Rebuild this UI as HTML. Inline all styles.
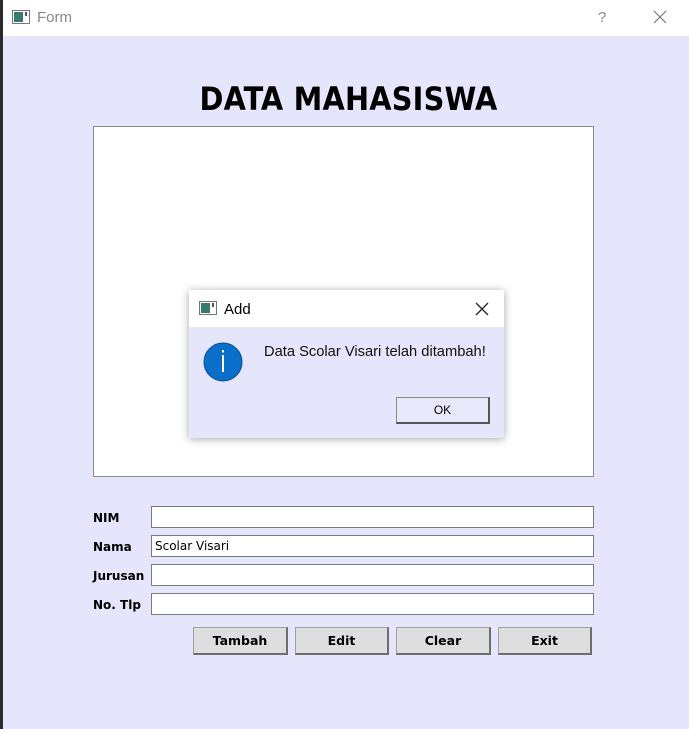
<!DOCTYPE html>
<html><head><style>
*{margin:0;padding:0;box-sizing:border-box}
body{width:689px;height:729px;position:relative;background:#e5e5fb;font-family:"DejaVu Sans","Liberation Sans",sans-serif;overflow:hidden}
.abs{position:absolute}
.strip{left:0;top:0;width:3px;height:729px;background:#2b2b2e}
.tb{left:3px;top:0;width:686px;height:36px;background:#fff}
.inp{position:absolute;left:151px;width:443px;height:22px;background:#fff;border:1px solid #7a7a7a;font-size:12px;padding:3px 3px;font-family:"DejaVu Sans",sans-serif}
.lbl{position:absolute;left:93px;font-size:12px;font-weight:bold;color:#000}
.btn{position:absolute;top:627px;height:28px;background:#dedede;border:1px solid #a0a0a0;border-right:2px solid #6e6e6e;border-bottom:2px solid #6e6e6e;font-size:12.5px;font-weight:bold;text-align:center;line-height:25px}
</style></head><body>
<div class="abs strip"></div>
<div class="abs tb"></div>
<svg class="abs" style="left:12px;top:10px" width="18" height="14"><rect x="0.5" y="0.5" width="17" height="13" fill="#fff" stroke="#777"/><rect x="2" y="2" width="9" height="10" fill="#3a7a6a"/><rect x="13" y="2" width="2" height="4" fill="#555"/></svg>
<div class="abs" style="left:37px;top:9px;font-size:15px;color:#888;font-family:'Liberation Sans',sans-serif">Form</div>
<div class="abs" style="left:598px;top:9px;font-size:15px;color:#888;font-family:'Liberation Sans',sans-serif">?</div>
<svg class="abs" style="left:653px;top:10px" width="14" height="14"><path d="M1 1L13 13M13 1L1 13" stroke="#777" stroke-width="1.2"/></svg>
<div class="abs" style="left:0;width:697px;top:80px;text-align:center;font-size:32px;font-weight:bold;font-family:'DejaVu Sans Condensed','DejaVu Sans',sans-serif;letter-spacing:0.2px">DATA MAHASISWA</div>
<div class="abs" style="left:93px;top:126px;width:501px;height:351px;background:#fff;border:1px solid #8a8a8a"></div>
<div class="abs" style="left:189px;top:290px;width:315px;height:148px;background:#e5e5fb;box-shadow:0 1px 8px rgba(0,0,0,0.35)">
 <div class="abs" style="left:0;top:0;width:315px;height:37px;background:#fff"></div>
 <svg class="abs" style="left:10px;top:11px" width="18" height="14"><rect x="0.5" y="0.5" width="17" height="13" fill="#fff" stroke="#777"/><rect x="2" y="2" width="9" height="10" fill="#3a7a6a"/><rect x="13" y="2" width="2" height="4" fill="#555"/></svg>
 <div class="abs" style="left:35px;top:11px;font-size:15px;font-family:'Liberation Sans',sans-serif">Add</div>
 <svg class="abs" style="left:286px;top:12px" width="14" height="14"><path d="M1 1L13 13M13 1L1 13" stroke="#222" stroke-width="1.3"/></svg>
 <svg class="abs" style="left:14px;top:52px" width="40" height="40"><circle cx="20" cy="20" r="19" fill="#0a6fc9" stroke="#0a4f90"/><rect x="19" y="13" width="2" height="17" fill="#fff"/><rect x="19" y="8" width="2" height="2.5" fill="#fff"/></svg>
 <div class="abs" style="left:75px;top:54px;font-size:14.7px;font-family:'Liberation Sans',sans-serif;color:#111">Data Scolar Visari telah ditambah!</div>
 <div class="abs" style="left:207px;top:107px;width:94px;height:27px;background:#e8e8fb;border:1px solid #888;border-right:2px solid #555;border-bottom:2px solid #555;text-align:center;line-height:24px;font-size:12px;font-family:'Liberation Sans',sans-serif">OK</div>
</div>
<div class="lbl" style="top:511px">NIM</div>
<div class="lbl" style="top:540px">Nama</div>
<div class="lbl" style="top:569px">Jurusan</div>
<div class="lbl" style="top:598px">No. Tlp</div>
<div class="inp" style="top:506px"></div>
<div class="inp" style="top:535px">Scolar Visari</div>
<div class="inp" style="top:564px"></div>
<div class="inp" style="top:593px"></div>
<div class="btn" style="left:193px;width:95px">Tambah</div>
<div class="btn" style="left:295px;width:94px">Edit</div>
<div class="btn" style="left:396px;width:95px">Clear</div>
<div class="btn" style="left:498px;width:94px">Exit</div>
</body></html>
